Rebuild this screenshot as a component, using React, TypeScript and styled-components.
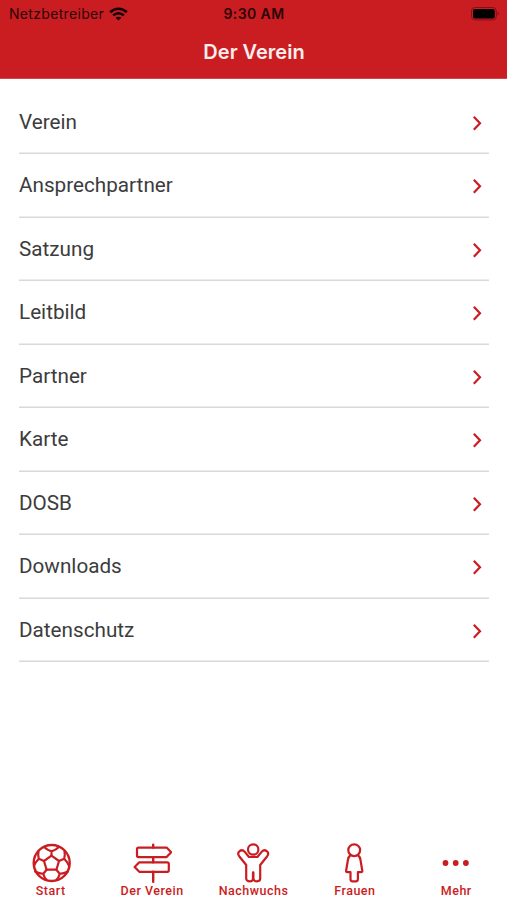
import React from "react";
import styled, { createGlobalStyle } from "styled-components";

const RED = "#ca1d22";

const GlobalStyle = createGlobalStyle`
  * { box-sizing: border-box; }
  body { margin: 0; background: #fff; }
`;

const Screen = styled.div`
  width: 507px;
  height: 900px;
  display: flex;
  flex-direction: column;
  background: #fff;
  overflow: hidden;
  font-family: Roboto, sans-serif;
`;

const Header = styled.header`
  height: 79px;
  flex: none;
  background: ${RED};
  border-bottom: 1px solid #d2474b;
  font-family: Inter, sans-serif;
`;

const StatusBar = styled.div`
  height: 27px;
  padding: 0 7px 0 9px;
  display: grid;
  grid-template-columns: 1fr auto 1fr;
  align-items: center;
  color: #2b0506;
`;

const Carrier = styled.div`
  display: flex;
  align-items: center;
  gap: 5px;
  font-size: 14px;
  line-height: 27px;
  letter-spacing: 0.32px;
`;

const Clock = styled.div`
  font-size: 14px;
  line-height: 27px;
  font-weight: 600;
  letter-spacing: 0.4px;
  padding-right: 1px;
`;

const Battery = styled.div`
  display: flex;
  justify-content: flex-end;
`;

const Title = styled.h1`
  margin: 0;
  padding-left: 1px;
  height: 51px;
  line-height: 51px;
  text-align: center;
  font-size: 20px;
  font-weight: 600;
  color: #fdeeee;
`;

const Menu = styled.ul`
  list-style: none;
  margin: 0;
  padding: 11.5px 18.5px 0 19px;
  flex: 1;
`;

const MenuRow = styled.li`
  height: 63.5px;
  padding: 0 6px 1.5px 0;
  display: flex;
  align-items: center;
  justify-content: space-between;
  box-shadow: inset 0 -1.4px #d9d9d9;
  font-size: 20.7px;
  color: #3c3c3c;
`;

const TabBar = styled.nav`
  height: 57px;
  flex: none;
  display: grid;
  grid-template-columns: repeat(5, 1fr);
`;

const Tab = styled.div`
  display: flex;
  flex-direction: column;
  align-items: center;
  color: ${RED};
`;

const TabLabel = styled.span`
  font-size: 12.5px;
  line-height: 14px;
  font-weight: 500;
  letter-spacing: 0.5px;
  white-space: nowrap;
  margin-top: 1px;
`;

const Glyph = styled.svg`
  display: block;
  flex: none;
  fill: none;
  stroke: currentColor;
  stroke-width: 2.2;
  stroke-linejoin: round;
  stroke-linecap: round;
`;

const RowArrow = styled(Glyph)`
  color: ${RED};
  stroke-linecap: butt;
  stroke-linejoin: miter;
`;

const Wifi = () => (
  <svg width="19" height="14" viewBox="0 0 19 14" fill="none" stroke="#170203" strokeWidth="2.7">
    <path d="M1.2 5.2C6 .6 13 .6 17.8 5.2" />
    <path d="M4.2 8.4C7.2 5.5 11.8 5.5 14.8 8.4" />
    <path d="M9.5 13.6L6.6 10.8C8.2 9.3 10.8 9.3 12.4 10.8Z" fill="#170203" stroke="none" />
  </svg>
);

const BatteryIcon = () => (
  <svg width="29" height="14" viewBox="0 0 29 14">
    <rect x="0.5" y="0.5" width="24.8" height="12.4" rx="3.4" fill="none" stroke="#850f14" />
    <rect x="2" y="2" width="21.8" height="9.4" rx="2" fill="#000" />
    <path d="M26.6 4.6C28.4 5.4 28.4 8 26.6 8.8Z" fill="#850f14" />
  </svg>
);

const Chevron = () => (
  <RowArrow width="12" height="20" viewBox="0 0 12 20">
    <path d="M2.8 4.8L9 11.3L2.8 17.8" />
  </RowArrow>
);

const icons: Record<string, React.ReactNode> = {
  Start: (
    <>
      <circle cx="20.7" cy="20" r="18" strokeWidth="2.4" />
      <path d="M20.5 12.7L28 18L25.4 26.7H15.6L13 18Z" />
      <path d="M20.5 12.7V8.4M13.5 4.2C15 6 17.5 7.3 20.5 8.4C23.5 7.3 26 6 27.5 4.2" />
      <path d="M13 18L7.8 15.8M7.5 8.2C7 11 7 13.5 7.8 15.8C5.8 17.8 4 20 3 23" />
      <path d="M28 18L33.2 15.8M33.5 8.2C34 11 34 13.5 33.2 15.8C35.2 17.8 37 20 38 23" />
      <path d="M15.6 26.7L12.3 30.8M4 28.6C6.7 30 9.4 30.8 12.3 30.8C12.7 33 14 35.4 15.8 37" />
      <path d="M25.4 26.7L28.7 30.8M37 28.6C34.3 30 31.6 30.8 28.7 30.8C28.3 33 27 35.4 25.2 37" />
    </>
  ),
  "Der Verein": (
    <>
      <path d="M21.2 1.6V4.5M21.2 14.2V19.2M21.2 28.8V38.8" strokeWidth="2.4" />
      <path d="M6.5 4.6H34.6L39.2 9.3L34.6 14.1H6.5Q5 14.1 5 12.6V6.1Q5 4.6 6.5 4.6Z" />
      <path d="M35.3 19.3H7.3L2.6 24L7.3 28.8H35.3Q36.8 28.8 36.8 27.3V20.8Q36.8 19.3 35.3 19.3Z" />
    </>
  ),
  Nachwuchs: (
    <>
      <circle cx="20.2" cy="6.5" r="5.2" />
      <path d="M13.2 35.6V22L6.2 13.2C3.2 9 8.6 5.2 11.8 8.9L16 14H24.4L28.6 8.9C31.8 5.2 37.2 9 34.2 13.2L27.2 22V35.6C27.2 39.2 20.4 39.4 20.4 35.4V29.4H20V35.4C20 39.4 13.2 39.2 13.2 35.6Z" />
    </>
  ),
  Frauen: (
    <>
      <circle cx="19.2" cy="7.2" r="5.9" />
      <path d="M15.2 12.5C13.5 13.7 13.2 15.2 12.9 17L11.1 27.8Q10.9 29.2 12.3 29.2H15.5V36Q15.5 38.3 17.5 38.3H20.9Q22.9 38.3 22.9 36V29.2H26.1Q27.5 29.2 27.3 27.8L25.5 17C25.2 15.2 24.9 13.7 23.2 12.5" />
    </>
  ),
  Mehr: (
    <g fill="currentColor" stroke="none">
      <circle cx="9.5" cy="20" r="2.9" />
      <circle cx="19.7" cy="20" r="2.9" />
      <circle cx="29.9" cy="20" r="2.9" />
    </g>
  ),
};

const entries = [
  "Verein",
  "Ansprechpartner",
  "Satzung",
  "Leitbild",
  "Partner",
  "Karte",
  "DOSB",
  "Downloads",
  "Datenschutz",
];

export default function App() {
  return (
    <Screen>
      <GlobalStyle />
      <Header>
        <StatusBar>
          <Carrier>
            Netzbetreiber
            <Wifi />
          </Carrier>
          <Clock>9:30 AM</Clock>
          <Battery>
            <BatteryIcon />
          </Battery>
        </StatusBar>
        <Title>Der Verein</Title>
      </Header>
      <Menu>
        {entries.map((entry) => (
          <MenuRow key={entry}>
            {entry}
            <Chevron />
          </MenuRow>
        ))}
      </Menu>
      <TabBar>
        {Object.entries(icons).map(([label, icon]) => (
          <Tab key={label}>
            <Glyph width="40" height="40" viewBox="0 0 40 40">
              {icon}
            </Glyph>
            <TabLabel>{label}</TabLabel>
          </Tab>
        ))}
      </TabBar>
    </Screen>
  );
}
